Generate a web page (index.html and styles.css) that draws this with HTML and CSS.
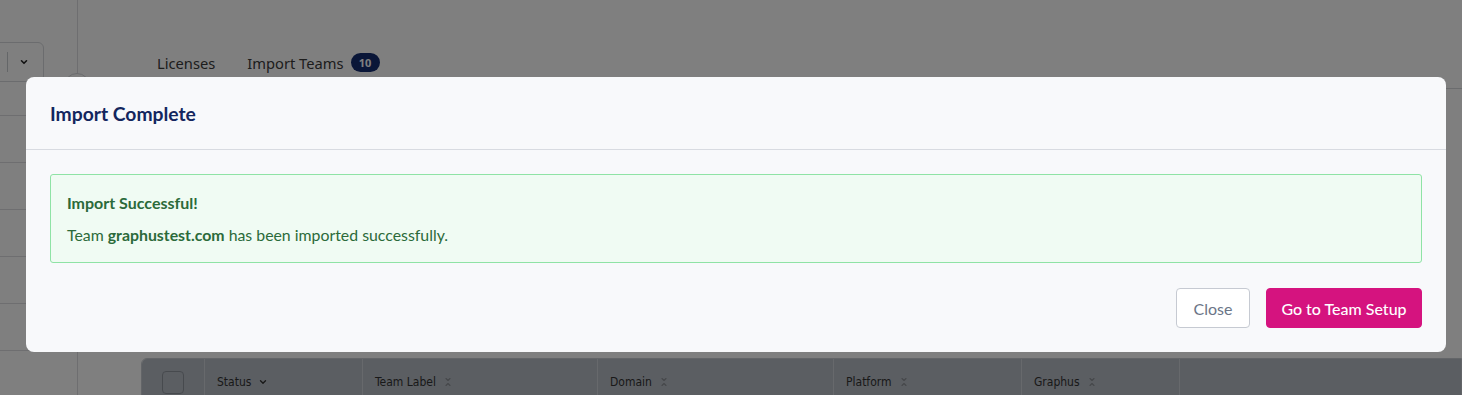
FILE: index.html
```html
<!DOCTYPE html>
<html lang="en">
<head>
<meta charset="utf-8">
<title>Import Complete</title>
<link rel="stylesheet" href="styles.css">
</head>
<body>
<div class="page">
  <aside class="sidebar">
    <div class="select">
      <span class="select-divider"></span>
      <svg class="select-chevron" width="10" height="10" viewBox="0 0 10 10"><path d="M2.5 3.8 5 6.3 7.5 3.8" fill="none" stroke="#222" stroke-width="1.6" stroke-linecap="round" stroke-linejoin="round"/></svg>
    </div>
    <div class="side-rows">
      <div class="side-row"></div>
      <div class="side-row"></div>
      <div class="side-row"></div>
      <div class="side-row"></div>
      <div class="side-row"></div>
      <div class="side-row"></div>
    </div>
    <span class="toggle"></span>
  </aside>
  <main class="main">
    <nav class="tabs">
      <span class="tab">Licenses</span>
      <span class="tab">Import Teams <span class="badge">10</span></span>
    </nav>
    <div class="table">
      <div class="thead">
        <div class="th th-check"><span class="checkbox"></span></div>
        <div class="th w-status">Status
          <svg class="sort" width="10" height="10" viewBox="0 0 10 10"><path d="M2.5 3.8 5 6.3 7.5 3.8" fill="none" stroke="#333" stroke-width="1.4" stroke-linecap="round" stroke-linejoin="round"/></svg>
        </div>
        <div class="th w-label">Team Label
          <svg class="sort" width="10" height="12" viewBox="0 0 10 12"><path d="M3 2.5 5 4.5 7 2.5M3 9.5 5 7.5 7 9.5" fill="none" stroke="#8a8e94" stroke-width="1.1" stroke-linecap="round" stroke-linejoin="round"/></svg>
        </div>
        <div class="th w-domain">Domain
          <svg class="sort" width="10" height="12" viewBox="0 0 10 12"><path d="M3 2.5 5 4.5 7 2.5M3 9.5 5 7.5 7 9.5" fill="none" stroke="#8a8e94" stroke-width="1.1" stroke-linecap="round" stroke-linejoin="round"/></svg>
        </div>
        <div class="th w-platform">Platform
          <svg class="sort" width="10" height="12" viewBox="0 0 10 12"><path d="M3 2.5 5 4.5 7 2.5M3 9.5 5 7.5 7 9.5" fill="none" stroke="#8a8e94" stroke-width="1.1" stroke-linecap="round" stroke-linejoin="round"/></svg>
        </div>
        <div class="th w-graphus">Graphus
          <svg class="sort" width="10" height="12" viewBox="0 0 10 12"><path d="M3 2.5 5 4.5 7 2.5M3 9.5 5 7.5 7 9.5" fill="none" stroke="#8a8e94" stroke-width="1.1" stroke-linecap="round" stroke-linejoin="round"/></svg>
        </div>
        <div class="th th-rest"></div>
      </div>
    </div>
  </main>
</div>

<div class="overlay"></div>

<div class="modal" role="dialog" aria-labelledby="modal-title">
  <header class="modal-header">
    <h2 id="modal-title" class="modal-title">Import Complete</h2>
  </header>
  <div class="modal-body">
    <div class="alert">
      <div class="alert-title">Import Successful!</div>
      <div class="alert-text">Team <strong>graphustest.com</strong> has been imported successfully.</div>
    </div>
  </div>
  <footer class="modal-footer">
    <button class="btn btn-secondary">Close</button>
    <button class="btn btn-primary">Go to Team Setup</button>
  </footer>
</div>
</body>
</html>
```

FILE: styles.css
```css
* { box-sizing: border-box; }

html, body {
  margin: 0;
  padding: 0;
  width: 1462px;
  height: 395px;
  overflow: hidden;
  background: #ffffff;
}

.page {
  display: flex;
  height: 395px;
  font-family: "Noto Sans", "Open Sans", sans-serif;
}

/* ---------- underlying page ---------- */
.sidebar {
  position: relative;
  width: 78px;
  flex: none;
  border-right: 1px solid #dcdde0;
  padding-top: 42px;
}

.select {
  margin-left: -10px;
  width: 54px;
  height: 40px;
  border: 1px solid #d6d8dc;
  border-radius: 6px;
  display: flex;
  align-items: center;
  padding-left: 16px;
  gap: 11px;
}

.select-divider {
  width: 1px;
  height: 20px;
  background: #c9ccd1;
}

.select-chevron { display: block; }

.side-rows {
  margin-top: 33px;
}

.side-row {
  height: 47px;
  border-top: 1px solid #dcdde0;
}

.toggle {
  position: absolute;
  left: 64px;
  top: 73px;
  width: 26px;
  height: 26px;
  border-radius: 50%;
  border: 1px solid #d6d8dc;
  background: #fff;
}

.main {
  flex: 1;
  display: flex;
  flex-direction: column;
  min-width: 0;
}

.tabs {
  flex: none;
  display: flex;
  gap: 32px;
  padding: 52px 0 0 79px;
  height: 89px;
  border-bottom: 1px solid #d6d8dc;
}

.tab {
  font-size: 14.7px;
  color: #3a3a3a;
  display: flex;
  align-items: flex-start;
  gap: 7px;
  line-height: 22px;
  white-space: nowrap;
}

.badge {
  flex: none;
  display: inline-flex;
  align-items: center;
  justify-content: center;
  height: 19px;
  width: 29px;
  margin-top: 1px;
  border-radius: 10px;
  background: #142c70;
  color: #fff;
  font-size: 11px;
  font-weight: 700;
}

.table {
  flex: none;
  margin: 269px 0 0 63px;
  border: 1px solid #c6cad0;
  border-radius: 6px 0 0 0;
  overflow: hidden;
}

.thead {
  display: flex;
  height: 46px;
  background: #b6bcc4;
}

.th {
  flex: none;
  display: flex;
  align-items: center;
  gap: 7px;
  padding: 0 12px;
  border-right: 1px solid #cfd3d9;
  font-family: "DejaVu Sans Condensed", "Open Sans", sans-serif;
  font-size: 12px;
  color: #333333;
  white-space: nowrap;
}

.th-check { width: 63px; justify-content: center; padding: 0; }
.checkbox {
  width: 22px;
  height: 23px;
  border: 1px solid #8e949c;
  border-radius: 4px;
}
.w-status { width: 158px; }
.w-label { width: 235px; }
.w-domain { width: 236px; }
.w-platform { width: 188px; }
.w-graphus { width: 158px; }
.th-rest { flex: 1; border-right: none; }

.sort { display: block; flex: none; }

/* ---------- overlay ---------- */
.overlay {
  position: fixed;
  inset: 0;
  background: rgba(0, 0, 0, 0.5);
}

/* ---------- modal ---------- */
.modal {
  position: fixed;
  left: 26px;
  top: 77px;
  width: 1420px;
  background: #f8f9fb;
  border-radius: 8px;
  font-family: "Lato", "Noto Sans", sans-serif;
  display: flex;
  flex-direction: column;
}

.modal-header {
  height: 73px;
  padding: 0 24px;
  display: flex;
  align-items: center;
  border-bottom: 1px solid #d8dbe1;
}

.modal-title {
  margin: 0;
  font-size: 19.3px;
  font-weight: 700;
  color: #13265e;
}

.modal-body {
  padding: 24px 24px 0;
}

.alert {
  height: 89px;
  border: 1px solid #8fe3a5;
  border-radius: 3px;
  background: #f0fbf3;
  padding: 18px 16px 0;
  color: #2b6a3a;
}

.alert-title {
  font-size: 16px;
  font-weight: 700;
  line-height: 20px;
}

.alert-text {
  margin-top: 12px;
  font-size: 15.85px;
  line-height: 20px;
}

.alert-text strong { font-weight: 700; }

.modal-footer {
  display: flex;
  justify-content: flex-end;
  gap: 16px;
  padding: 25px 24px 24px;
}

.btn {
  height: 40px;
  border-radius: 4px;
  font-family: "Lato", "Noto Sans", sans-serif;
  font-size: 16px;
  padding: 0;
  white-space: nowrap;
  cursor: pointer;
}

.btn-secondary {
  width: 74px;
  background: #ffffff;
  border: 1px solid #c6cad2;
  color: #6b7587;
}

.btn-primary {
  width: 156px;
  background: #d5137f;
  border: 1px solid #d5137f;
  color: #ffffff;
  font-weight: 500;
}
```
